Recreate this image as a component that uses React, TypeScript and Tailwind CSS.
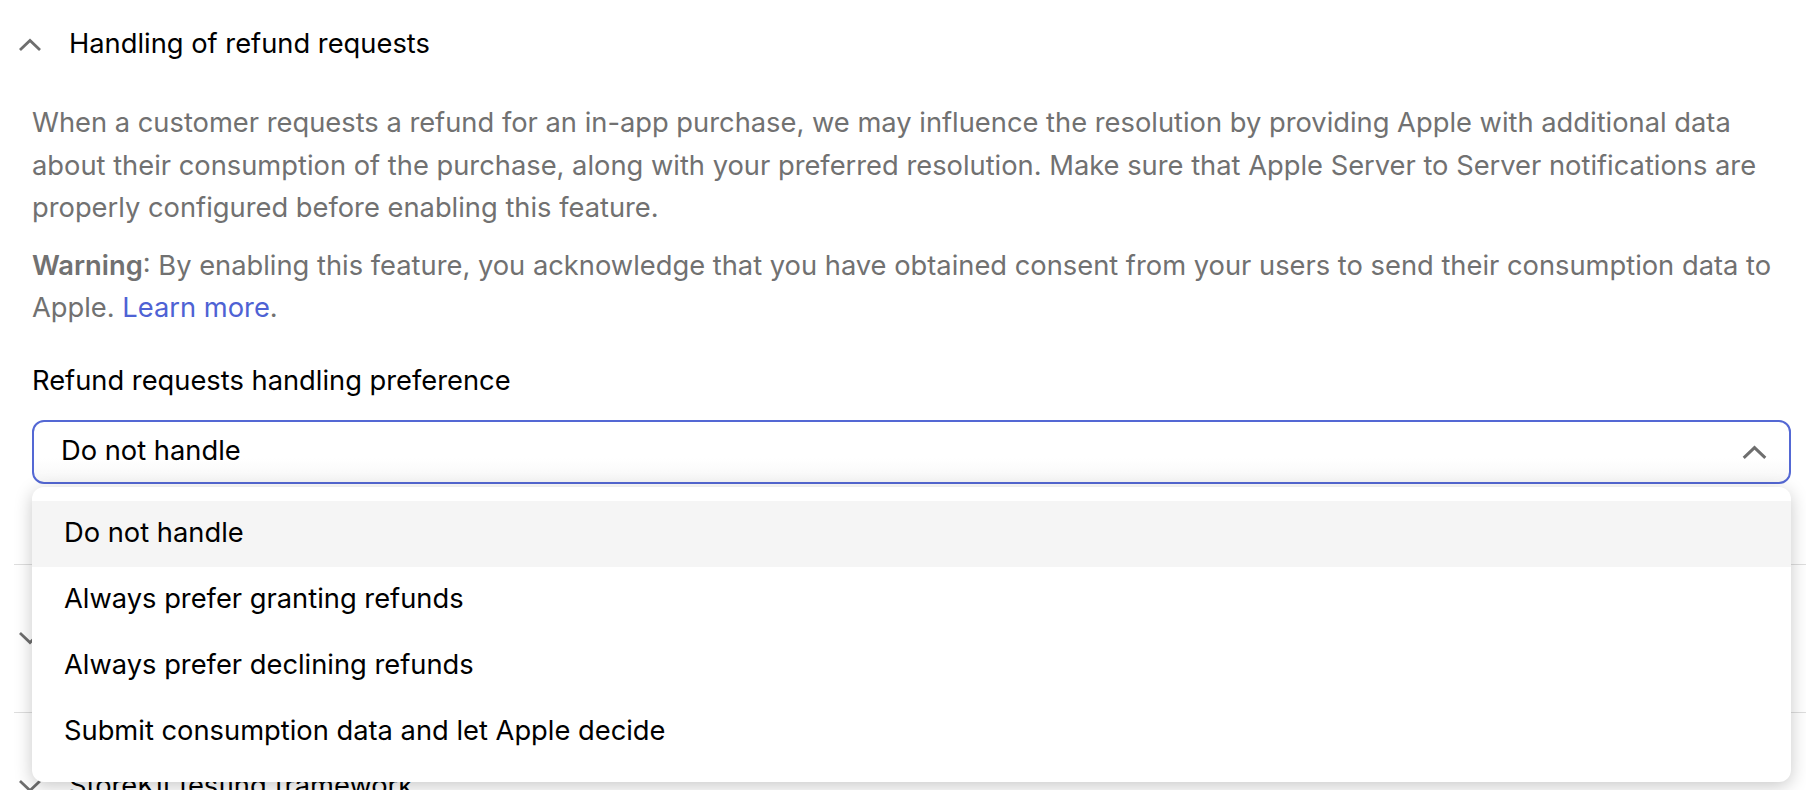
const options = [
  "Do not handle",
  "Always prefer granting refunds",
  "Always prefer declining refunds",
  "Submit consumption data and let Apple decide",
];

function Chevron({ up, className }: { up?: boolean; className?: string }) {
  return (
    <svg viewBox="0 0 22 13" fill="none" className={className}>
      <polyline
        points={up ? "2,11 11,2.5 20,11" : "2,2 11,10.5 20,2"}
        stroke="currentColor"
        strokeWidth="2.8"
        strokeLinecap="square"
        strokeLinejoin="miter"
      />
    </svg>
  );
}

function SectionHeader({ title, open }: { title: string; open?: boolean }) {
  return (
    <div className="flex items-center h-[88px] pl-[19px] gap-[28px]">
      <Chevron up={open} className="w-[22px] h-[13px] text-[#6e6e6e]" />
      <span className="text-black">{title}</span>
    </div>
  );
}

export default function App() {
  const selected = options[0];

  return (
    <div className="w-[1806px] h-[790px] overflow-hidden bg-white text-[27.3px] leading-[42.6px] font-['Inter',sans-serif] antialiased">
      {/* Expanded section */}
      <div className="pb-[80px]">
        <SectionHeader title="Handling of refund requests" open />
        <div className="pl-[32px] pr-[15px] pt-[14px]">
          <p className="text-[#717171]">
            When a customer requests a refund for an in-app purchase, we may influence the resolution by providing Apple with additional data
            <br />
            about their consumption of the purchase, along with your preferred resolution. Make sure that Apple Server to Server notifications are
            <br />
            properly configured before enabling this feature.
          </p>
          <p className="text-[#717171] mt-[15px]">
            <span className="font-semibold">Warning</span>: By enabling this feature, you acknowledge that you have obtained consent from your users to send their consumption data to
            <br />
            Apple. <span className="text-[#4e62d4]">Learn more</span>.
          </p>

          <div className="mt-[30px] text-black">Refund requests handling preference</div>

          <div className="relative mt-[17px]">
            <div className="flex items-center justify-between h-[64px] pl-[27px] pr-[22px] border-2 border-[#5468d4] rounded-[12px] bg-gradient-to-b from-white from-60% to-[#f7f7f7]">
              <span className="text-black">{selected}</span>
              <Chevron up className="w-[25px] h-[14px] text-[#6e6e6e]" />
            </div>

            {/* Open listbox */}
            <div className="absolute left-0 right-0 top-[67px] z-10 bg-white rounded-[12px] pt-[14px] pb-[17px] shadow-[0_4px_18px_rgba(0,0,0,0.22)]">
              {options.map((opt) => (
                <div
                  key={opt}
                  className={`flex items-center h-[66px] px-[32px] text-black ${opt === selected ? "bg-[#f5f5f5]" : ""}`}
                >
                  {opt}
                </div>
              ))}
            </div>
          </div>
        </div>
      </div>

      {/* Collapsed sections */}
      <div className="ml-[14px] border-t border-[#dedede]" />
      <div className="h-[147px] flex items-center">
        <SectionHeader title="Subscription offers" />
      </div>
      <div className="ml-[14px] border-t border-[#dedede]" />
      <div className="h-[147px] flex items-center">
        <SectionHeader title="StoreKit testing framework" />
      </div>
    </div>
  );
}
